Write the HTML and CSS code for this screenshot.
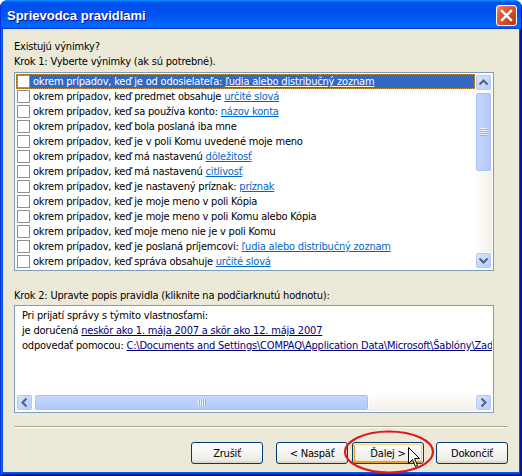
FILE: index.html
```html
<!DOCTYPE html>
<html lang="sk">
<head>
<meta charset="utf-8">
<title>Sprievodca pravidlami</title>
<link rel="stylesheet" href="styles.css">
</head>
<body>
<div class="window">
  <div class="titlebar">
    <span class="title">Sprievodca pravidlami</span>
    <span class="close">
      <svg width="19" height="19" viewBox="0 0 19 19"><path d="M5 5 L14 14 M14 5 L5 14" stroke="#fff" stroke-width="2.4" stroke-linecap="square"/></svg>
    </span>
  </div>
  <div class="frame">
    <div class="client">
      <div class="label">Existujú výnimky?</div>
      <div class="label">Krok 1: Vyberte výnimky (ak sú potrebné).</div>
      <div class="listbox">
        <div class="rows">
          <div class="row sel"><span class="cb"></span><span>okrem prípadov, keď je od odosielateľa: <span class="lnk">ľudia alebo distribučný zoznam</span></span></div>
          <div class="row"><span class="cb"></span><span>okrem prípadov, keď predmet obsahuje <span class="lnk">určité slová</span></span></div>
          <div class="row"><span class="cb"></span><span>okrem prípadov, keď sa používa konto: <span class="lnk">názov konta</span></span></div>
          <div class="row"><span class="cb"></span><span>okrem prípadov, keď bola poslaná iba mne</span></div>
          <div class="row"><span class="cb"></span><span>okrem prípadov, keď je v poli Komu uvedené moje meno</span></div>
          <div class="row"><span class="cb"></span><span>okrem prípadov, keď má nastavenú <span class="lnk">dôležitosť</span></span></div>
          <div class="row"><span class="cb"></span><span>okrem prípadov, keď má nastavenú <span class="lnk">citlivosť</span></span></div>
          <div class="row"><span class="cb"></span><span>okrem prípadov, keď je nastavený príznak: <span class="lnk">príznak</span></span></div>
          <div class="row"><span class="cb"></span><span>okrem prípadov, keď je moje meno v poli Kópia</span></div>
          <div class="row"><span class="cb"></span><span>okrem prípadov, keď je moje meno v poli Komu alebo Kópia</span></div>
          <div class="row"><span class="cb"></span><span>okrem prípadov, keď moje meno nie je v poli Komu</span></div>
          <div class="row"><span class="cb"></span><span>okrem prípadov, keď je poslaná príjemcovi: <span class="lnk">ľudia alebo distribučný zoznam</span></span></div>
          <div class="row"><span class="cb"></span><span>okrem prípadov, keď správa obsahuje <span class="lnk">určité slová</span></span></div>
        </div>
        <div class="vscroll">
          <div class="sbtn"><svg width="15" height="15" viewBox="0 0 15 15"><path d="M3.5 9.5 L7.5 5.5 L11.5 9.5" fill="none" stroke="#4D6185" stroke-width="2"/></svg></div>
          <div class="thumb vthumb"><svg width="8" height="8" viewBox="0 0 8 8"><rect x="0" y="0" width="7" height="1" fill="#EEF4FE"/><rect x="0" y="1" width="7" height="1" fill="#8CB0F8"/><rect x="0" y="2" width="7" height="1" fill="#EEF4FE"/><rect x="0" y="3" width="7" height="1" fill="#8CB0F8"/><rect x="0" y="4" width="7" height="1" fill="#EEF4FE"/><rect x="0" y="5" width="7" height="1" fill="#8CB0F8"/><rect x="0" y="6" width="7" height="1" fill="#EEF4FE"/><rect x="0" y="7" width="7" height="1" fill="#8CB0F8"/></svg></div>
          <div class="track"></div>
          <div class="sbtn"><svg width="15" height="15" viewBox="0 0 15 15"><path d="M3.5 5.5 L7.5 9.5 L11.5 5.5" fill="none" stroke="#4D6185" stroke-width="2"/></svg></div>
        </div>
      </div>
      <div class="label step2">Krok 2: Upravte popis pravidla (kliknite na podčiarknutú hodnotu):</div>
      <div class="desc">
        <div class="desc-text">
          <div>Pri prijatí správy s týmito vlastnosťami:</div>
          <div>je doručená <span class="dlnk">neskôr ako 1. mája 2007 a skôr ako 12. mája 2007</span></div>
          <div>odpovedať pomocou: <span class="dlnk">C:\Documents and Settings\COMPAQ\Application Data\Microsoft\Šablóny\Zadanie.oft</span></div>
        </div>
        <div class="hscroll">
          <div class="sbtn"><svg width="15" height="15" viewBox="0 0 15 15"><path d="M9.5 3.5 L5.5 7.5 L9.5 11.5" fill="none" stroke="#4D6185" stroke-width="2"/></svg></div>
          <div class="thumb hthumb"><svg width="8" height="8" viewBox="0 0 8 8"><rect x="0" y="0" width="1" height="7" fill="#EEF4FE"/><rect x="1" y="0" width="1" height="7" fill="#8CB0F8"/><rect x="2" y="0" width="1" height="7" fill="#EEF4FE"/><rect x="3" y="0" width="1" height="7" fill="#8CB0F8"/><rect x="4" y="0" width="1" height="7" fill="#EEF4FE"/><rect x="5" y="0" width="1" height="7" fill="#8CB0F8"/><rect x="6" y="0" width="1" height="7" fill="#EEF4FE"/><rect x="7" y="0" width="1" height="7" fill="#8CB0F8"/></svg></div>
          <div class="track"></div>
          <div class="sbtn"><svg width="15" height="15" viewBox="0 0 15 15"><path d="M5.5 3.5 L9.5 7.5 L5.5 11.5" fill="none" stroke="#4D6185" stroke-width="2"/></svg></div>
        </div>
      </div>
      <div class="sep"></div>
      <div class="buttons">
        <button class="btn b-cancel">Zrušiť</button>
        <button class="btn">&lt; Naspäť</button>
        <button class="btn hot b-next">Ďalej &gt;</button>
        <button class="btn b-finish">Dokončiť</button>
      </div>
    </div>
  </div>
  <svg class="ring" width="94" height="48" viewBox="0 0 94 48"><ellipse cx="47" cy="23" rx="44" ry="20.5" fill="none" stroke="#E0191B" stroke-width="2.2"/></svg>
  <svg class="cursor" width="13" height="21" viewBox="0 0 13 21"><path d="M0.5 0.5 L0.5 16.5 L4.5 12.5 L7.5 19.5 L9.5 18.5 L6.5 11.5 L11.5 11.5 Z" fill="#fff" stroke="#000" stroke-width="1" stroke-linejoin="miter"/></svg>
</div>
</body>
</html>
```

FILE: styles.css
```css
* { box-sizing: border-box; }
html, body { margin: 0; padding: 0; background: #fff; }
body {
  width: 522px;
  height: 476px;
  overflow: hidden;
  font-family: "DejaVu Sans Condensed", "DejaVu Sans", "Liberation Sans", sans-serif;
  font-stretch: semi-condensed;
  font-size: 11px;
  letter-spacing: -0.2px;
  color: #000;
}
.window {
  position: relative;
  width: 522px;
  height: 476px;
  display: flex;
  flex-direction: column;
  border-radius: 8px 8px 0 0;
  overflow: hidden;
  background: #0054E3;
}
.titlebar {
  height: 29px;
  flex: none;
  display: flex;
  align-items: flex-start;
  padding-left: 7px;
  background: linear-gradient(180deg, #0997ff, #0053ee 8%, #0050ee 40%, #0066ff 88%, #0066ff 93%, #005bff 95%, #003dd7 96%, #003dd7);
  box-shadow: inset 1px 0 #0831d9, inset -1px 0 #00138c;
}
.title {
  margin-top: 8px;
  font-family: "Liberation Sans", Arial, sans-serif;
  font-stretch: normal;
  font-weight: bold;
  font-size: 13px;
  line-height: 15px;
  letter-spacing: 0;
  color: #fff;
  text-shadow: 1px 1px #0f1089;
}
.close {
  margin-left: auto;
  margin-top: 5px;
  margin-right: 5px;
  width: 21px;
  height: 21px;
  border: 1px solid #fff;
  border-radius: 3px;
  background: radial-gradient(circle at 85% 85%, #c23a10 0%, #d94a22 45%, #e5643f 75%, #f0a58c 100%);
  display: flex;
  align-items: center;
  justify-content: center;
}
.close svg { display: block; }
.frame {
  flex: 1;
  display: flex;
  padding: 0 3px 4px 3px;
  background: #0054E3;
  box-shadow: inset 1px 0 #0831d9, inset -1px 0 #00138c, inset 0 -1px #00138c, inset 2px 0 #166aee, inset -2px 0 #001ea0, inset 0 -2px #001ea0;
}
.client {
  flex: 1;
  background: #ECE9D8;
  padding: 10px 11px 0 11px;
  display: flex;
  flex-direction: column;
}
.label {
  height: 15px;
  line-height: 15px;
  white-space: nowrap;
}
.listbox {
  margin-top: 3px;
  width: 480px;
  height: 199px;
  flex: none;
  border: 1px solid #7F9DB9;
  padding: 1px;
  background: #fff;
  display: flex;
}
.rows { flex: 1; overflow: hidden; }
.row {
  height: 15px;
  line-height: 15px;
  display: flex;
  align-items: center;
  white-space: nowrap;
}
.cb {
  flex: none;
  width: 13px;
  height: 13px;
  margin: 0 3px 0 1px;
  border: 1px solid #8E8F8F;
  background: #fff;
}
.lnk { color: #0066CC; text-decoration: underline; }
.row.sel {
  background: #316AC5;
  color: #fff;
  outline: 1px dotted #CE953A;
  outline-offset: -1px;
}
.row.sel .lnk { color: #fff; }
.vscroll {
  width: 17px;
  flex: none;
  display: flex;
  flex-direction: column;
  background: linear-gradient(90deg, #fefefe, #f1efe6);
}
.hscroll {
  height: 17px;
  flex: none;
  display: flex;
  background: linear-gradient(180deg, #fefefe, #f1efe6);
}
.track { flex: 1; }
.sbtn {
  width: 17px;
  height: 17px;
  flex: none;
  border: 1px solid #fff;
  border-radius: 3px;
  background: linear-gradient(135deg, #dce6fe, #c3d5fc 60%, #b6cbf9);
  box-shadow: inset 0 0 0 1px #b4c7f2;
  display: flex;
  align-items: center;
  justify-content: center;
}
.sbtn svg { display: block; }
.thumb {
  flex: none;
  border: 1px solid #fff;
  border-radius: 3px;
  box-shadow: inset 0 0 0 1px #a9bff0;
  display: flex;
  align-items: center;
  justify-content: center;
}
.thumb svg { display: block; }
.vthumb {
  margin-top: 1px;
  height: 80px;
  background: linear-gradient(90deg, #c6d7fd, #bcd0fb 50%, #b3c8f7);
}
.hthumb {
  margin-left: 1px;
  width: 335px;
  background: linear-gradient(180deg, #c6d7fd, #bcd0fb 50%, #b3c8f7);
}
.step2 { margin-top: 17px; }
.desc {
  margin-top: 2px;
  width: 480px;
  height: 108px;
  flex: none;
  border: 1px solid #7F9DB9;
  padding: 1px;
  background: #fff;
  display: flex;
  flex-direction: column;
}
.desc-text {
  flex: 1;
  overflow: hidden;
  padding: 1px 0 0 6px;
  line-height: 15px;
  white-space: nowrap;
}
.dlnk { color: #000080; text-decoration: underline; }
.sep {
  margin-top: 13px;
  height: 2px;
  flex: none;
  border-top: 1px solid #ACA899;
  border-bottom: 1px solid #fff;
}
.buttons {
  margin-top: 14px;
  display: flex;
  justify-content: flex-end;
}
.btn {
  width: 72px;
  height: 22px;
  padding: 0;
  border: 1px solid #003C74;
  border-radius: 3px;
  background: linear-gradient(180deg, #fff, #ECEBE6 86%, #D6D0C5);
  font: inherit;
  font-stretch: semi-condensed;
  letter-spacing: -0.2px;
  color: #000;
}
.b-cancel { margin-right: 13px; }
.b-next { margin-left: 4px; }
.b-finish { margin-left: 12px; }
.btn.hot {
  box-shadow: inset -1px 1px #fff0cf, inset 1px 2px #fdd889, inset -2px 2px #fbc761, inset 2px -2px #e5a01a;
}
.ring {
  position: absolute;
  left: 342px;
  top: 429px;
}
.cursor {
  position: absolute;
  left: 408px;
  top: 447px;
}
```
